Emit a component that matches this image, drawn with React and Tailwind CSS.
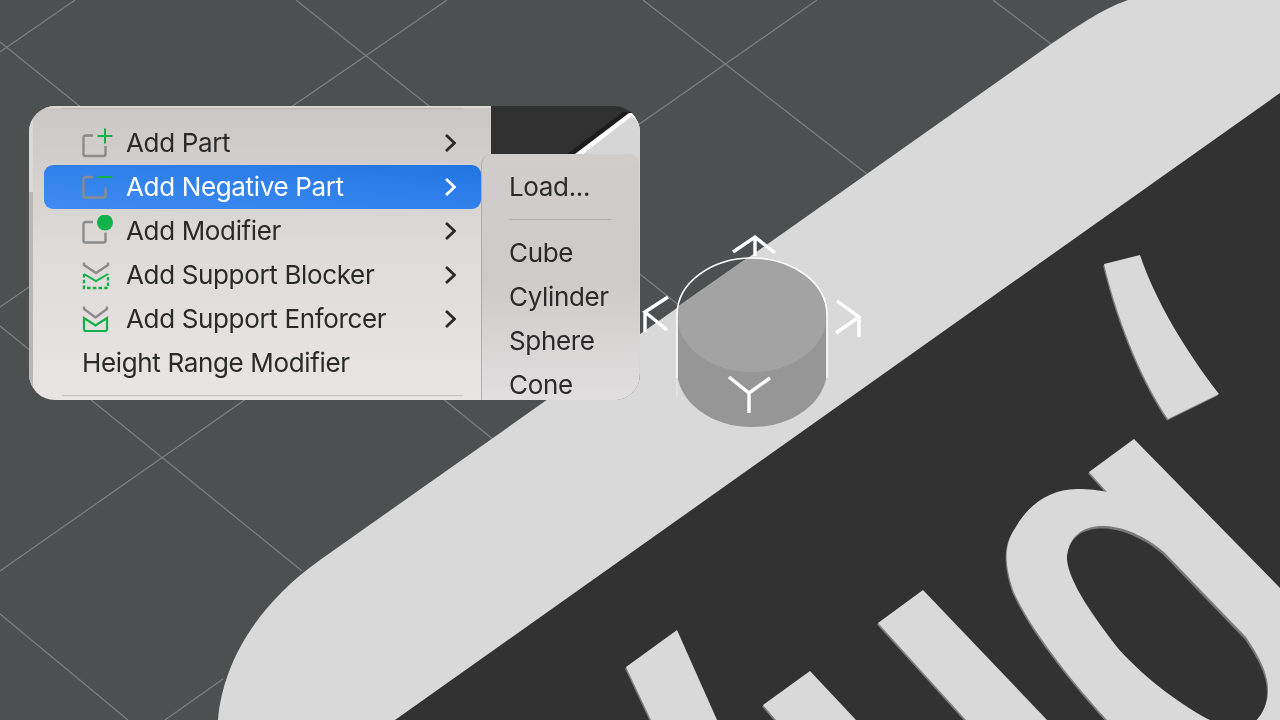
import React from "react";

const GRAY = "#8b8b8b";
const GREEN = "#12b24a";

function Square({ y = 0 }) {
  return (
    <path
      transform={`translate(0 ${y})`}
      d="M12 8.5H4.5a2 2 0 0 0-2 2V27a2 2 0 0 0 2 2H22.5a2 2 0 0 0 2-2V19"
      fill="none"
      stroke={GRAY}
      strokeWidth="2.4"
    />
  );
}

function Icon({ kind }) {
  return (
    <svg width="32" height="32" viewBox="0 0 32 32" className="shrink-0">
      {kind === "plus" && (
        <>
          <Square y={0} />
          <path d="M16.5 9H31.5M24 1.5V16.5" stroke={GREEN} strokeWidth="2" fill="none" />
        </>
      )}
      {kind === "minus" && (
        <>
          <Square y={-2.5} />
          <path d="M16.5 6H31.5" stroke={GREEN} strokeWidth="2.2" fill="none" />
        </>
      )}
      {kind === "dot" && (
        <>
          <Square y={-1.5} />
          <circle cx="24" cy="7.5" r="8" fill={GREEN} />
        </>
      )}
      {kind === "blocker" && (
        <>
          <path d="M3 3.5V6L15 14L27 6V3.5" fill="none" stroke={GRAY} strokeWidth="2.4" />
          <path d="M3 15V29H27V15" fill="none" stroke={GREEN} strokeWidth="2.3" strokeDasharray="3.5 2.2" />
          <path d="M3 15L15 22L27 15" fill="none" stroke={GREEN} strokeWidth="2" />
        </>
      )}
      {kind === "enforcer" && (
        <>
          <path d="M3 3.5V6L14.5 14.5L26 6V3.5" fill="none" stroke={GRAY} strokeWidth="2.4" />
          <path d="M3 15V26a2 2 0 0 0 2 2H24a2 2 0 0 0 2-2V15L14.5 22.5Z" fill="none" stroke={GREEN} strokeWidth="2.2" />
        </>
      )}
    </svg>
  );
}

function Chevron({ active }) {
  return (
    <svg width="12" height="18" viewBox="0 0 12 18" className="ml-auto mr-[25px] shrink-0">
      <path d="M2 1L10.5 9L2 17" fill="none" stroke={active ? "#ffffff" : "#2a2a2a"} strokeWidth="2.8" />
    </svg>
  );
}

const rows = [
  { label: "Add Part", icon: "plus" },
  { label: "Add Negative Part", icon: "minus", active: true },
  { label: "Add Modifier", icon: "dot" },
  { label: "Add Support Blocker", icon: "blocker" },
  { label: "Add Support Enforcer", icon: "enforcer" },
];

function MainMenu() {
  return (
    <div className="relative w-[462px] shrink-0 bg-gradient-to-b from-[#cbc7c5] via-[#dedbd9] to-[#e8e5e4]">
      <div className="absolute left-0 top-0 h-[2px] w-full bg-[#dbd8d6]" />
      <div className="absolute left-0 top-[86px] bottom-0 w-1 bg-[#b9b7b6]" />
      <div className="absolute left-0 top-0 h-[86px] w-1 bg-[#dad7d5]" />
      <div className="ml-[33px] mr-[28px] mt-[2px] h-px bg-[#b9b5b3]" />
      <div className="mt-3 flex flex-col">
        {rows.map((r) => (
          <div
            key={r.label}
            className={
              r.active
                ? "ml-[15px] mr-[10px] flex h-11 items-center gap-[13px] rounded-[9px] bg-gradient-to-tr from-[#3f8cf2] to-[#2176e3] pl-[37px] text-white"
                : "ml-[15px] mr-[10px] flex h-11 items-center gap-[13px] pl-[37px] text-[#2a2a2a]"
            }
          >
            <Icon kind={r.icon} />
            <span>{r.label}</span>
            <Chevron active={r.active} />
          </div>
        ))}
        <div className="ml-[15px] mr-[10px] flex h-11 items-center pl-[38px] text-[#2a2a2a]">Height Range Modifier</div>
      </div>
      <div className="ml-[33px] mr-[28px] mt-[10px] h-px bg-[#c6c3c1]" />
    </div>
  );
}

function SubMenu() {
  return (
    <div className="absolute bottom-0 left-[452px] top-[48px] w-[158px] overflow-hidden rounded-t-[10px] border-l border-[#aeadac] bg-gradient-to-b from-[#d0cdcb] via-[#cdcaca] to-[#e0dede] pl-[27px] pt-[11px] text-[#2a2a2a]">
      <div className="flex h-11 items-center">Load...</div>
      <div className="mt-[10px] mb-[11px] h-px w-[102px] bg-[#b5b1ae]" />
      <div className="flex h-11 items-center">Cube</div>
      <div className="flex h-11 items-center">Cylinder</div>
      <div className="flex h-11 items-center">Sphere</div>
      <div className="flex h-11 items-center">Cone</div>
    </div>
  );
}

function Scene() {
  const lines = [
    [75, 0, 0, 52],
    [0, 42, 494, 440],
    [296, 0, 680, 306],
    [447, 0, 0, 307],
    [643, 0, 867, 174],
    [817, 0, 0, 571],
    [993, 0, 1051, 44],
    [0, 326, 302, 571],
    [0, 614, 128, 720],
    [223, 679, 165, 720],
  ];
  const d =
    "M1134 439L1280 588V720H1107C1075 685 1030 630 1013 590C1005 565 1003 545 1016 527C1028 505 1050 489 1077 489C1090 489 1098 490 1107 492L1089 472Z";
  const counter =
    "M1068 557C1068 535 1085 525 1105 526C1128 527 1150 540 1164 552L1246 637C1258 655 1268 672 1268 690C1268 703 1263 713 1255 720H1216C1190 708 1150 680 1120 647C1095 615 1070 580 1068 557Z";
  const bars = [
    "923,590 878,623 966,720 1047,720",
    "810,671 763,705 776,720 856,720",
    "677,630 626,667 651,720 717,720",
  ];
  const sliver = "M1104 264L1140 255C1155 300 1185 350 1219 394L1168 419C1145 385 1120 330 1104 264Z";
  return (
    <svg width="1280" height="720" viewBox="0 0 1280 720" className="block">
      <defs>
        <clipPath id="below-plate">
          <polygon points="600,361 900,151 900,500 600,500" />
        </clipPath>
      </defs>
      {lines.map((l, i) => (
        <line key={i} x1={l[0]} y1={l[1]} x2={l[2]} y2={l[3]} stroke="#7d807f" strokeWidth="1.2" />
      ))}
      <path d="M218 720C222 670 250 610 320 560L1051 44C1075 28 1100 10 1128 0H1280V720Z" fill="#d9d9d9" />
      <polygon points="395,720 1280,93 1280,720" fill="#323232" />
      <g fill="#7f7f7f" transform="translate(-1 1.6)">
        <path d={d} />
        <path d={sliver} />
        {bars.map((b) => (
          <polygon key={b} points={b} />
        ))}
      </g>
      <g fill="#d9d9d9">
        <path d={d} />
        <path d={sliver} />
        {bars.map((b) => (
          <polygon key={b} points={b} />
        ))}
      </g>
      <path d={counter} fill="#7a7a7a" />
      <path d={counter} fill="#323232" transform="translate(-1 2.5)" />

      <g clipPath="url(#below-plate)">
        <path d="M677 315V370A75 57 0 0 0 827 370V315A75 57 0 0 0 677 315Z" fill="#969696" />
        <ellipse cx="752" cy="315" rx="75" ry="57" fill="#a3a3a3" />
      </g>
      <path d="M677 378V315A75 57 0 0 1 827 315V378" fill="none" stroke="#ffffff" strokeWidth="1.6" />
      <path d="M677 378V397" fill="none" stroke="#ffffff" strokeOpacity="0.5" strokeWidth="1" />
      <g fill="none" stroke="#ffffff" strokeWidth="3.4">
        <path d="M733 252L755 237L775 253M755 237V256" />
        <path d="M668 297L645 312L667 330M645 312V332" />
        <path d="M837 301L859 317L836 333M859 317V337" />
        <path d="M729 377L749 393L770 378M749 393V413" />
      </g>
    </svg>
  );
}

function BlurredBackdrop() {
  return (
    <svg width="149" height="294" viewBox="0 0 149 294" className="block shrink-0">
      <rect width="149" height="294" fill="#313131" />
      <polygon points="76,48 132,6 149,6 149,60 100,60" fill="#1c1c1c" />
      <polygon points="84,48 138,7 149,7 149,60 100,60" fill="#ffffff" />
      <polygon points="92,48 141,10 149,18 149,294 92,294" fill="#d6d6d6" />
    </svg>
  );
}

export default function App() {
  return (
    <div className="relative h-[720px] w-[1280px] overflow-hidden bg-[#4d5051]">
      <Scene />
      <div
        className="absolute left-[29px] top-[106px] flex h-[294px] w-[611px] overflow-hidden rounded-[26px] text-[26px] leading-none tracking-[-0.35px] blur-[0.35px]"
        style={{ fontFamily: "Inter, 'Noto Sans', sans-serif" }}
      >
        <MainMenu />
        <BlurredBackdrop />
        <SubMenu />
      </div>
    </div>
  );
}
